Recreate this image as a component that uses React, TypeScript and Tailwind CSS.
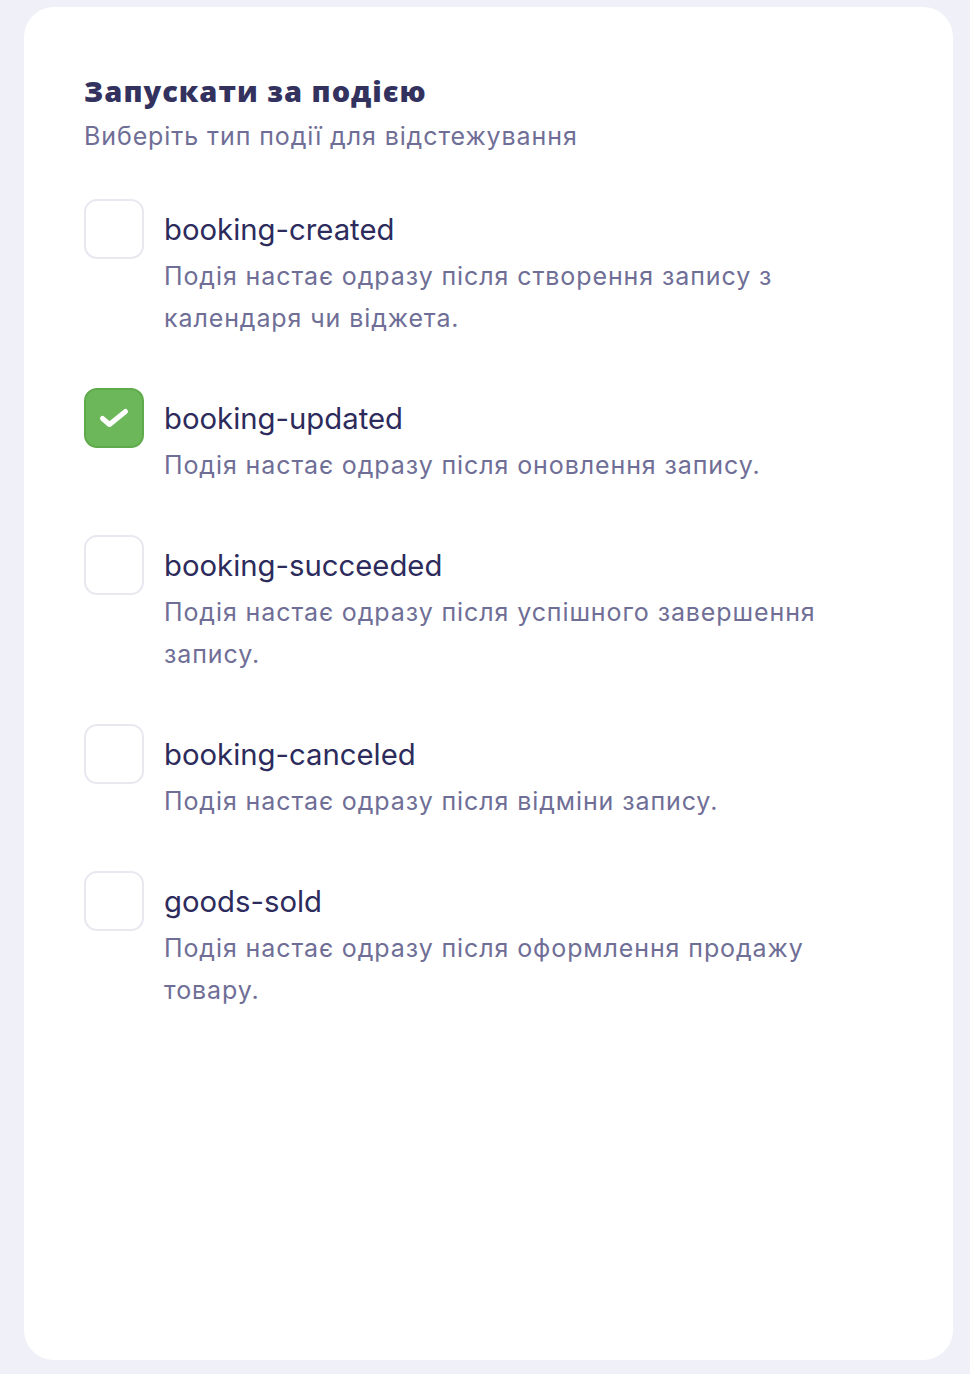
import { useState } from 'react';

const events = [
  { id: 'booking-created', text: 'Подія настає одразу після створення запису з календаря чи віджета.' },
  { id: 'booking-updated', text: 'Подія настає одразу після оновлення запису.' },
  { id: 'booking-succeeded', text: 'Подія настає одразу після успішного завершення запису.' },
  { id: 'booking-canceled', text: 'Подія настає одразу після відміни запису.' },
  { id: 'goods-sold', text: 'Подія настає одразу після оформлення продажу товару.' },
];

export default function App() {
  const [checked, setChecked] = useState<string[]>(['booking-updated']);

  const toggle = (id: string) =>
    setChecked((prev) => (prev.includes(id) ? prev.filter((x) => x !== id) : [...prev, id]));

  return (
    <div className="min-h-[1374px] bg-[#f0f0f8] pt-[7px] pl-[24px] pr-[17px] pb-[14px]">
      <div className="h-[1353px] rounded-[30px] bg-white pl-[60px] pr-[60px] pt-[64px] font-['Inter',sans-serif]">
        {/* Header */}
        <h1 className="font-['Open_Sans',sans-serif] text-[29px] font-extrabold leading-[40px] tracking-[1px] text-[#33325f]">
          Запускати за подією
        </h1>
        <p className="mt-[8px] text-[25px] leading-[34px] tracking-[0.9px] text-[#6f6e96]">
          Виберіть тип події для відстежування
        </p>

        {/* Event list */}
        <div className="mt-[46px] flex flex-col gap-[49px]">
          {events.map((ev) => {
            const on = checked.includes(ev.id);
            return (
              <label key={ev.id} className="flex cursor-pointer items-start gap-[20px]">
                <button
                  type="button"
                  onClick={() => toggle(ev.id)}
                  className={
                    on
                      ? 'flex h-[60px] w-[60px] shrink-0 items-center justify-center rounded-[13px] border-2 border-[#5fab4c] bg-[#6cb75a]'
                      : 'h-[60px] w-[60px] shrink-0 rounded-[13px] border-2 border-[#e8e8f0] bg-white'
                  }
                >
                  {on && (
                    <svg width="34" height="34" viewBox="0 0 34 34" fill="none">
                      <path
                        d="M5.5 17.5L12.5 23.5L28.5 10.5"
                        stroke="white"
                        strokeWidth="5"
                        strokeLinecap="round"
                        strokeLinejoin="round"
                      />
                    </svg>
                  )}
                </button>
                <div className="max-w-[665px] pt-[11px]">
                  <div className="text-[29.3px] leading-[40px] text-[#2c2b5c]">{ev.id}</div>
                  <div className="mt-[5px] text-[25px] leading-[42px] tracking-[0.9px] text-[#6f6e96]">
                    {ev.text}
                  </div>
                </div>
              </label>
            );
          })}
        </div>
      </div>
    </div>
  );
}
